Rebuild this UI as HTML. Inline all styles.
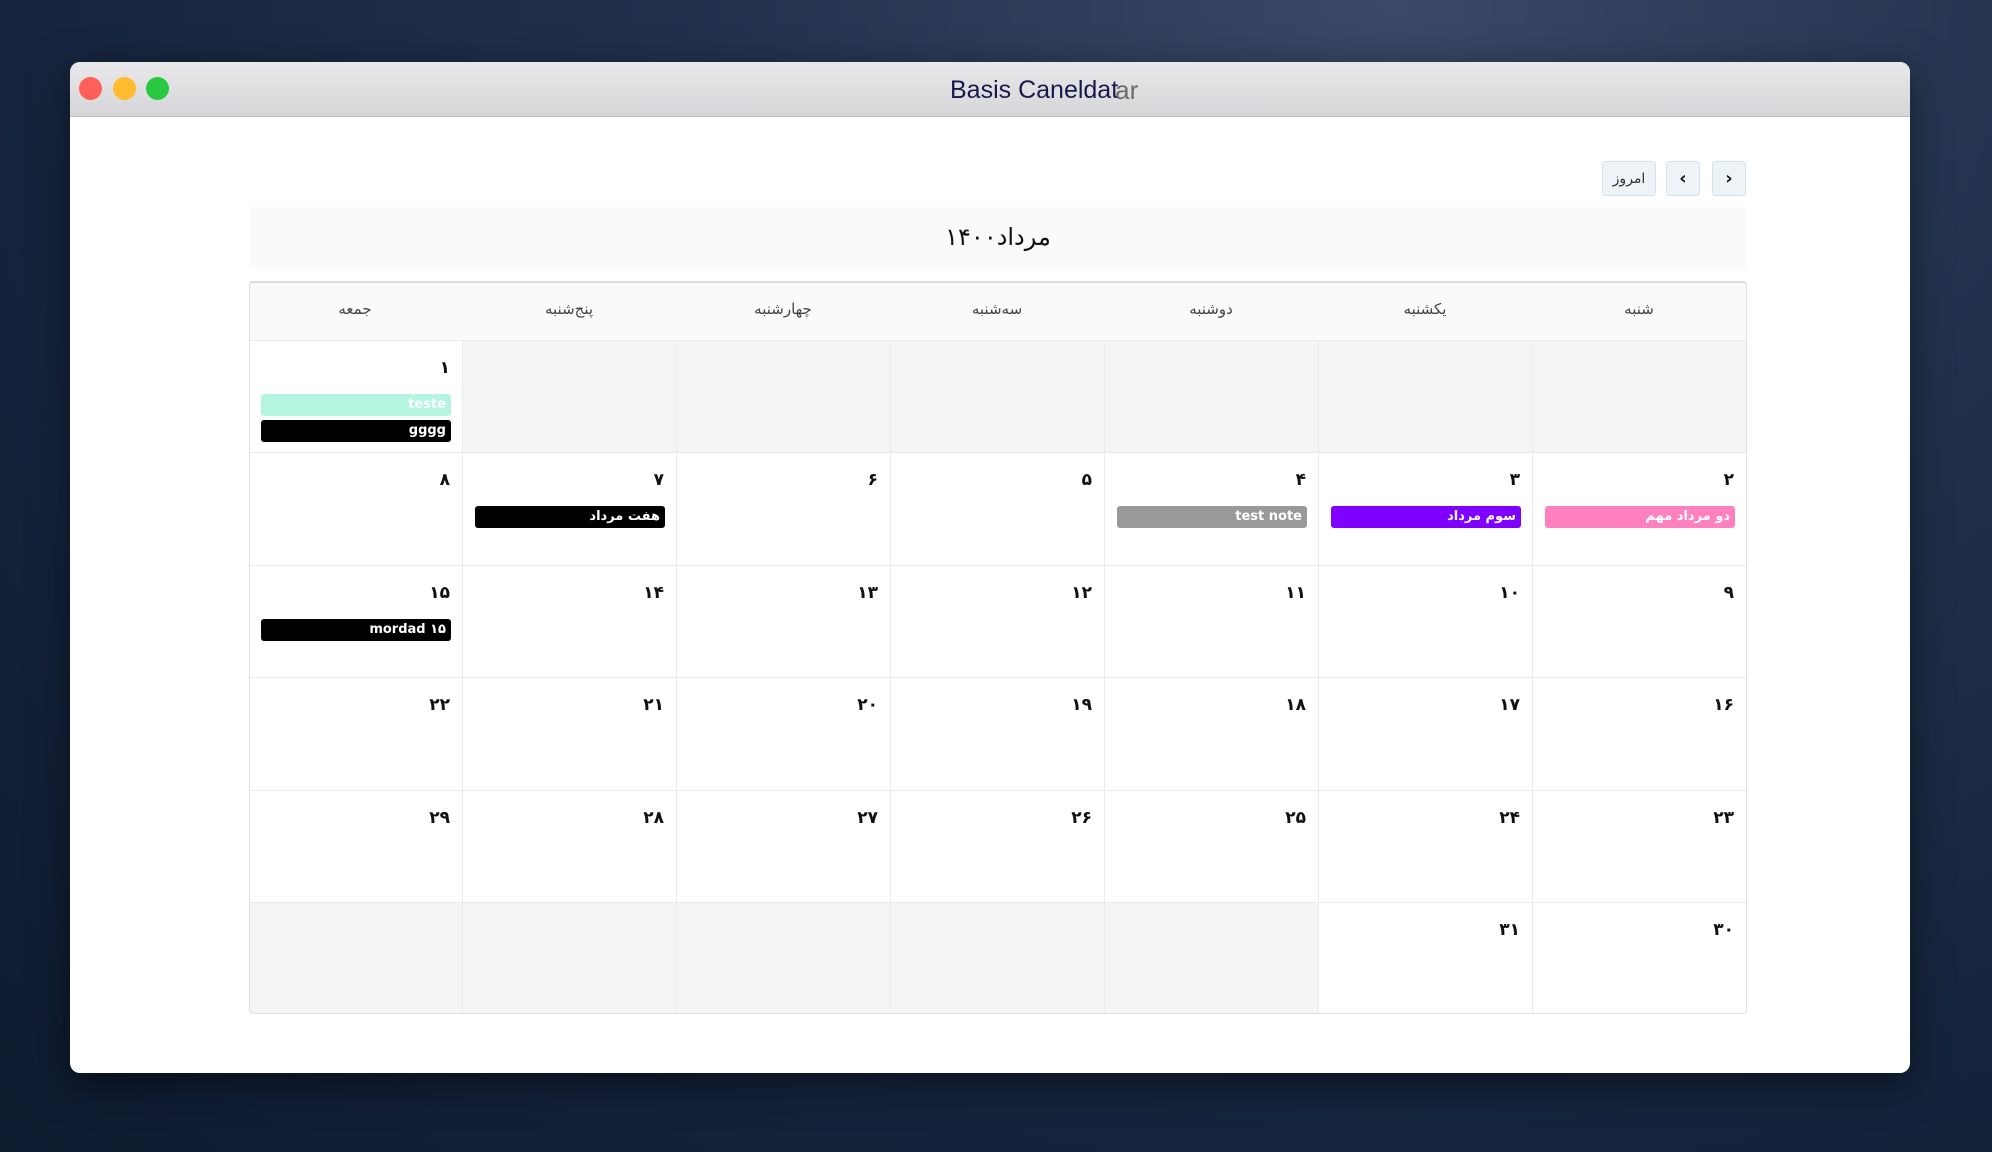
<!DOCTYPE html>
<html><head><meta charset="utf-8"><style>
*{margin:0;padding:0;box-sizing:border-box}
body{width:1992px;height:1152px;overflow:hidden;position:relative;font-family:"DejaVu Sans","Liberation Sans",sans-serif;
background:radial-gradient(ellipse at 70% 0%,#3a4a66 0%,#22324d 35%,#15243d 70%,#0e1a2e 100%)}
.win{position:absolute;left:70px;top:62px;width:1840px;height:1011px;background:#fff;border-radius:10px;overflow:hidden;box-shadow:0 10px 40px rgba(0,0,0,.5)}
.tb{position:absolute;left:0;top:0;width:100%;height:55px;background:linear-gradient(#e9e8ea,#d6d5d8);border-bottom:1px solid #bdbcc0}
.dot{position:absolute;top:15px;width:23px;height:23px;border-radius:50%}
.title{position:absolute;left:880px;top:12px;font-family:"Liberation Sans",sans-serif;font-size:25px;color:#161a4a;white-space:nowrap}
.title span{color:#6b6b6b;font-size:26px;position:relative;top:1px;margin-left:-3px}
.btn{position:absolute;top:99px;height:35px;border:1px solid #d5e3ee;background:#eef3f7;border-radius:3px;font-size:14px;color:#333;display:flex;align-items:center;justify-content:center}
.btn.a{font-size:18px;font-weight:bold;color:#111}
.band{position:absolute;left:179px;top:145px;width:1498px;height:62px;background:#fafafa;text-align:center;font-size:24px;line-height:60px;color:#111}
.tbl{position:absolute;left:179px;top:219px;width:1498px;height:733px;border:1px solid #e0e0e0;border-top:2px solid #dcdcdc;border-radius:4px;overflow:hidden;direction:rtl}
.hd{position:absolute;top:0;height:57px;width:214px;text-align:center;line-height:42px;padding-top:5px;font-size:15px;color:#444;background:#fafafa}
.c{position:absolute;width:214px;height:113px;border-left:1px solid #ebebeb;border-top:1px solid #ebebeb;background:#fff}
.c.o{background:#f5f5f5}
.n{position:absolute;right:12px;top:17px;font-size:17px;font-weight:bold;color:#111}
.e{position:absolute;right:11px;left:12px;height:22px;border-radius:3px;color:#fff;font-size:13px;font-weight:bold;text-align:right;padding-right:5px;line-height:22px;white-space:nowrap}
</style></head><body>
<div class="win">
 <div class="tb">
  <div class="dot" style="left:9px;background:#fe5f57"></div>
  <div class="dot" style="left:43px;background:#febc2e"></div>
  <div class="dot" style="left:76px;background:#28c840"></div>
  <div class="title">Basis Caneldat<span>ar</span></div>
 </div>
 <div class="btn" style="left:1532px;width:54px">امروز</div>
 <div class="btn a" style="left:1596px;width:34px">‹</div>
 <div class="btn a" style="left:1642px;width:34px">›</div>
 <div class="band">مرداد۱۴۰۰</div>
 <div class="tbl">
  <div class="hd" style="right:0">شنبه</div>
  <div class="hd" style="right:214px">یکشنبه</div>
  <div class="hd" style="right:428px">دوشنبه</div>
  <div class="hd" style="right:642px">سه‌شنبه</div>
  <div class="hd" style="right:856px">چهارشنبه</div>
  <div class="hd" style="right:1070px">پنج‌شنبه</div>
  <div class="hd" style="right:1284px">جمعه</div>

  <div class="c o" style="right:0;top:57px"></div>
  <div class="c o" style="right:214px;top:57px"></div>
  <div class="c o" style="right:428px;top:57px"></div>
  <div class="c o" style="right:642px;top:57px"></div>
  <div class="c o" style="right:856px;top:57px"></div>
  <div class="c o" style="right:1070px;top:57px"></div>
  <div class="c" style="right:1284px;top:57px"><div class="n">۱</div><div class="e" style="top:53px;background:#b3f5e0">teste</div><div class="e" style="top:79px;background:#000">gggg</div></div>

  <div class="c" style="right:0;top:169px"><div class="n">۲</div><div class="e" style="top:53px;background:#ff80bf">دو مرداد مهم</div></div>
  <div class="c" style="right:214px;top:169px"><div class="n">۳</div><div class="e" style="top:53px;background:#8000ff">سوم مرداد</div></div>
  <div class="c" style="right:428px;top:169px"><div class="n">۴</div><div class="e" style="top:53px;background:#999">test note</div></div>
  <div class="c" style="right:642px;top:169px"><div class="n">۵</div></div>
  <div class="c" style="right:856px;top:169px"><div class="n">۶</div></div>
  <div class="c" style="right:1070px;top:169px"><div class="n">۷</div><div class="e" style="top:53px;background:#000">هفت مرداد</div></div>
  <div class="c" style="right:1284px;top:169px"><div class="n">۸</div></div>

  <div class="c" style="right:0;top:282px"><div class="n">۹</div></div>
  <div class="c" style="right:214px;top:282px"><div class="n">۱۰</div></div>
  <div class="c" style="right:428px;top:282px"><div class="n">۱۱</div></div>
  <div class="c" style="right:642px;top:282px"><div class="n">۱۲</div></div>
  <div class="c" style="right:856px;top:282px"><div class="n">۱۳</div></div>
  <div class="c" style="right:1070px;top:282px"><div class="n">۱۴</div></div>
  <div class="c" style="right:1284px;top:282px"><div class="n">۱۵</div><div class="e" style="top:53px;background:#000"><span dir="ltr">mordad ۱۵</span></div></div>

  <div class="c" style="right:0;top:394px"><div class="n">۱۶</div></div>
  <div class="c" style="right:214px;top:394px"><div class="n">۱۷</div></div>
  <div class="c" style="right:428px;top:394px"><div class="n">۱۸</div></div>
  <div class="c" style="right:642px;top:394px"><div class="n">۱۹</div></div>
  <div class="c" style="right:856px;top:394px"><div class="n">۲۰</div></div>
  <div class="c" style="right:1070px;top:394px"><div class="n">۲۱</div></div>
  <div class="c" style="right:1284px;top:394px"><div class="n">۲۲</div></div>

  <div class="c" style="right:0;top:507px"><div class="n">۲۳</div></div>
  <div class="c" style="right:214px;top:507px"><div class="n">۲۴</div></div>
  <div class="c" style="right:428px;top:507px"><div class="n">۲۵</div></div>
  <div class="c" style="right:642px;top:507px"><div class="n">۲۶</div></div>
  <div class="c" style="right:856px;top:507px"><div class="n">۲۷</div></div>
  <div class="c" style="right:1070px;top:507px"><div class="n">۲۸</div></div>
  <div class="c" style="right:1284px;top:507px"><div class="n">۲۹</div></div>

  <div class="c" style="right:0;top:619px;height:120px"><div class="n">۳۰</div></div>
  <div class="c" style="right:214px;top:619px;height:120px"><div class="n">۳۱</div></div>
  <div class="c o" style="right:428px;top:619px;height:120px"></div>
  <div class="c o" style="right:642px;top:619px;height:120px"></div>
  <div class="c o" style="right:856px;top:619px;height:120px"></div>
  <div class="c o" style="right:1070px;top:619px;height:120px"></div>
  <div class="c o" style="right:1284px;top:619px;height:120px"></div>
 </div>
</div>
</body></html>
